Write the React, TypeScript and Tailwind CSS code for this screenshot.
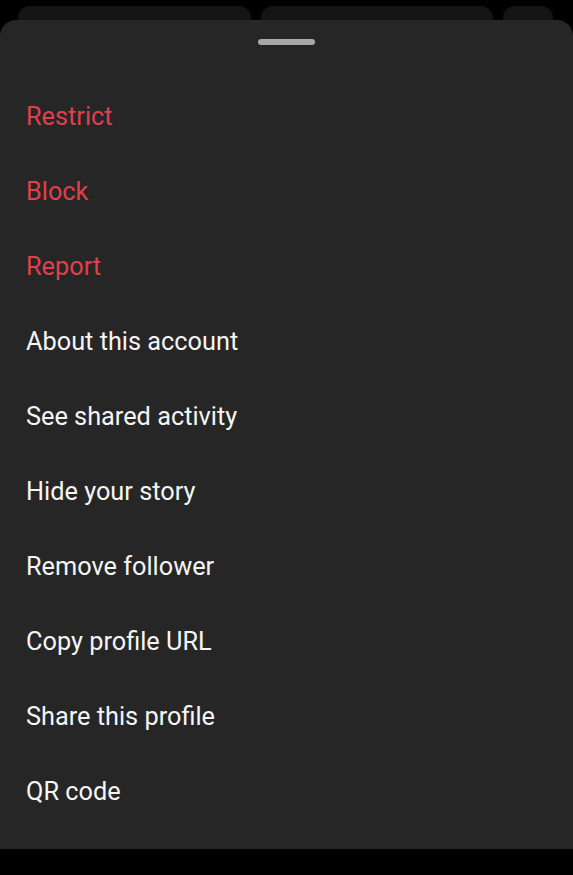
const items = [
  { label: "Restrict", danger: true },
  { label: "Block", danger: true },
  { label: "Report", danger: true },
  { label: "About this account" },
  { label: "See shared activity" },
  { label: "Hide your story" },
  { label: "Remove follower" },
  { label: "Copy profile URL" },
  { label: "Share this profile" },
  { label: "QR code" },
];

export default function App() {
  return (
    <div className="w-[573px] h-[875px] bg-black flex flex-col overflow-hidden font-['Roboto',sans-serif]">
      {/* cards behind the sheet */}
      <div className="flex gap-[10px] pl-[18px] pt-[6px] h-[20px]">
        <div className="w-[233px] h-[30px] rounded-t-[12px] bg-[#141414]" />
        <div className="w-[232px] h-[30px] rounded-t-[12px] bg-[#141414]" />
        <div className="w-[50px] h-[30px] rounded-t-[12px] bg-[#141414]" />
      </div>

      {/* bottom sheet */}
      <div className="relative h-[829px] bg-[#262626] rounded-t-[16px] flex flex-col">
        <div className="flex justify-center pt-[19px]">
          <div className="w-[57px] h-[6px] rounded-full bg-[#a8a8a8]" />
        </div>
        <ul className="flex flex-col pt-[34px]">
          {items.map((it) => (
            <li
              key={it.label}
              className={`h-[75px] flex items-center pl-[26px] text-[25.3px] leading-none ${
                it.danger ? "text-[#e0404c]" : "text-[#f5f5f5]"
              }`}
            >
              {it.label}
            </li>
          ))}
        </ul>
      </div>
    </div>
  );
}
